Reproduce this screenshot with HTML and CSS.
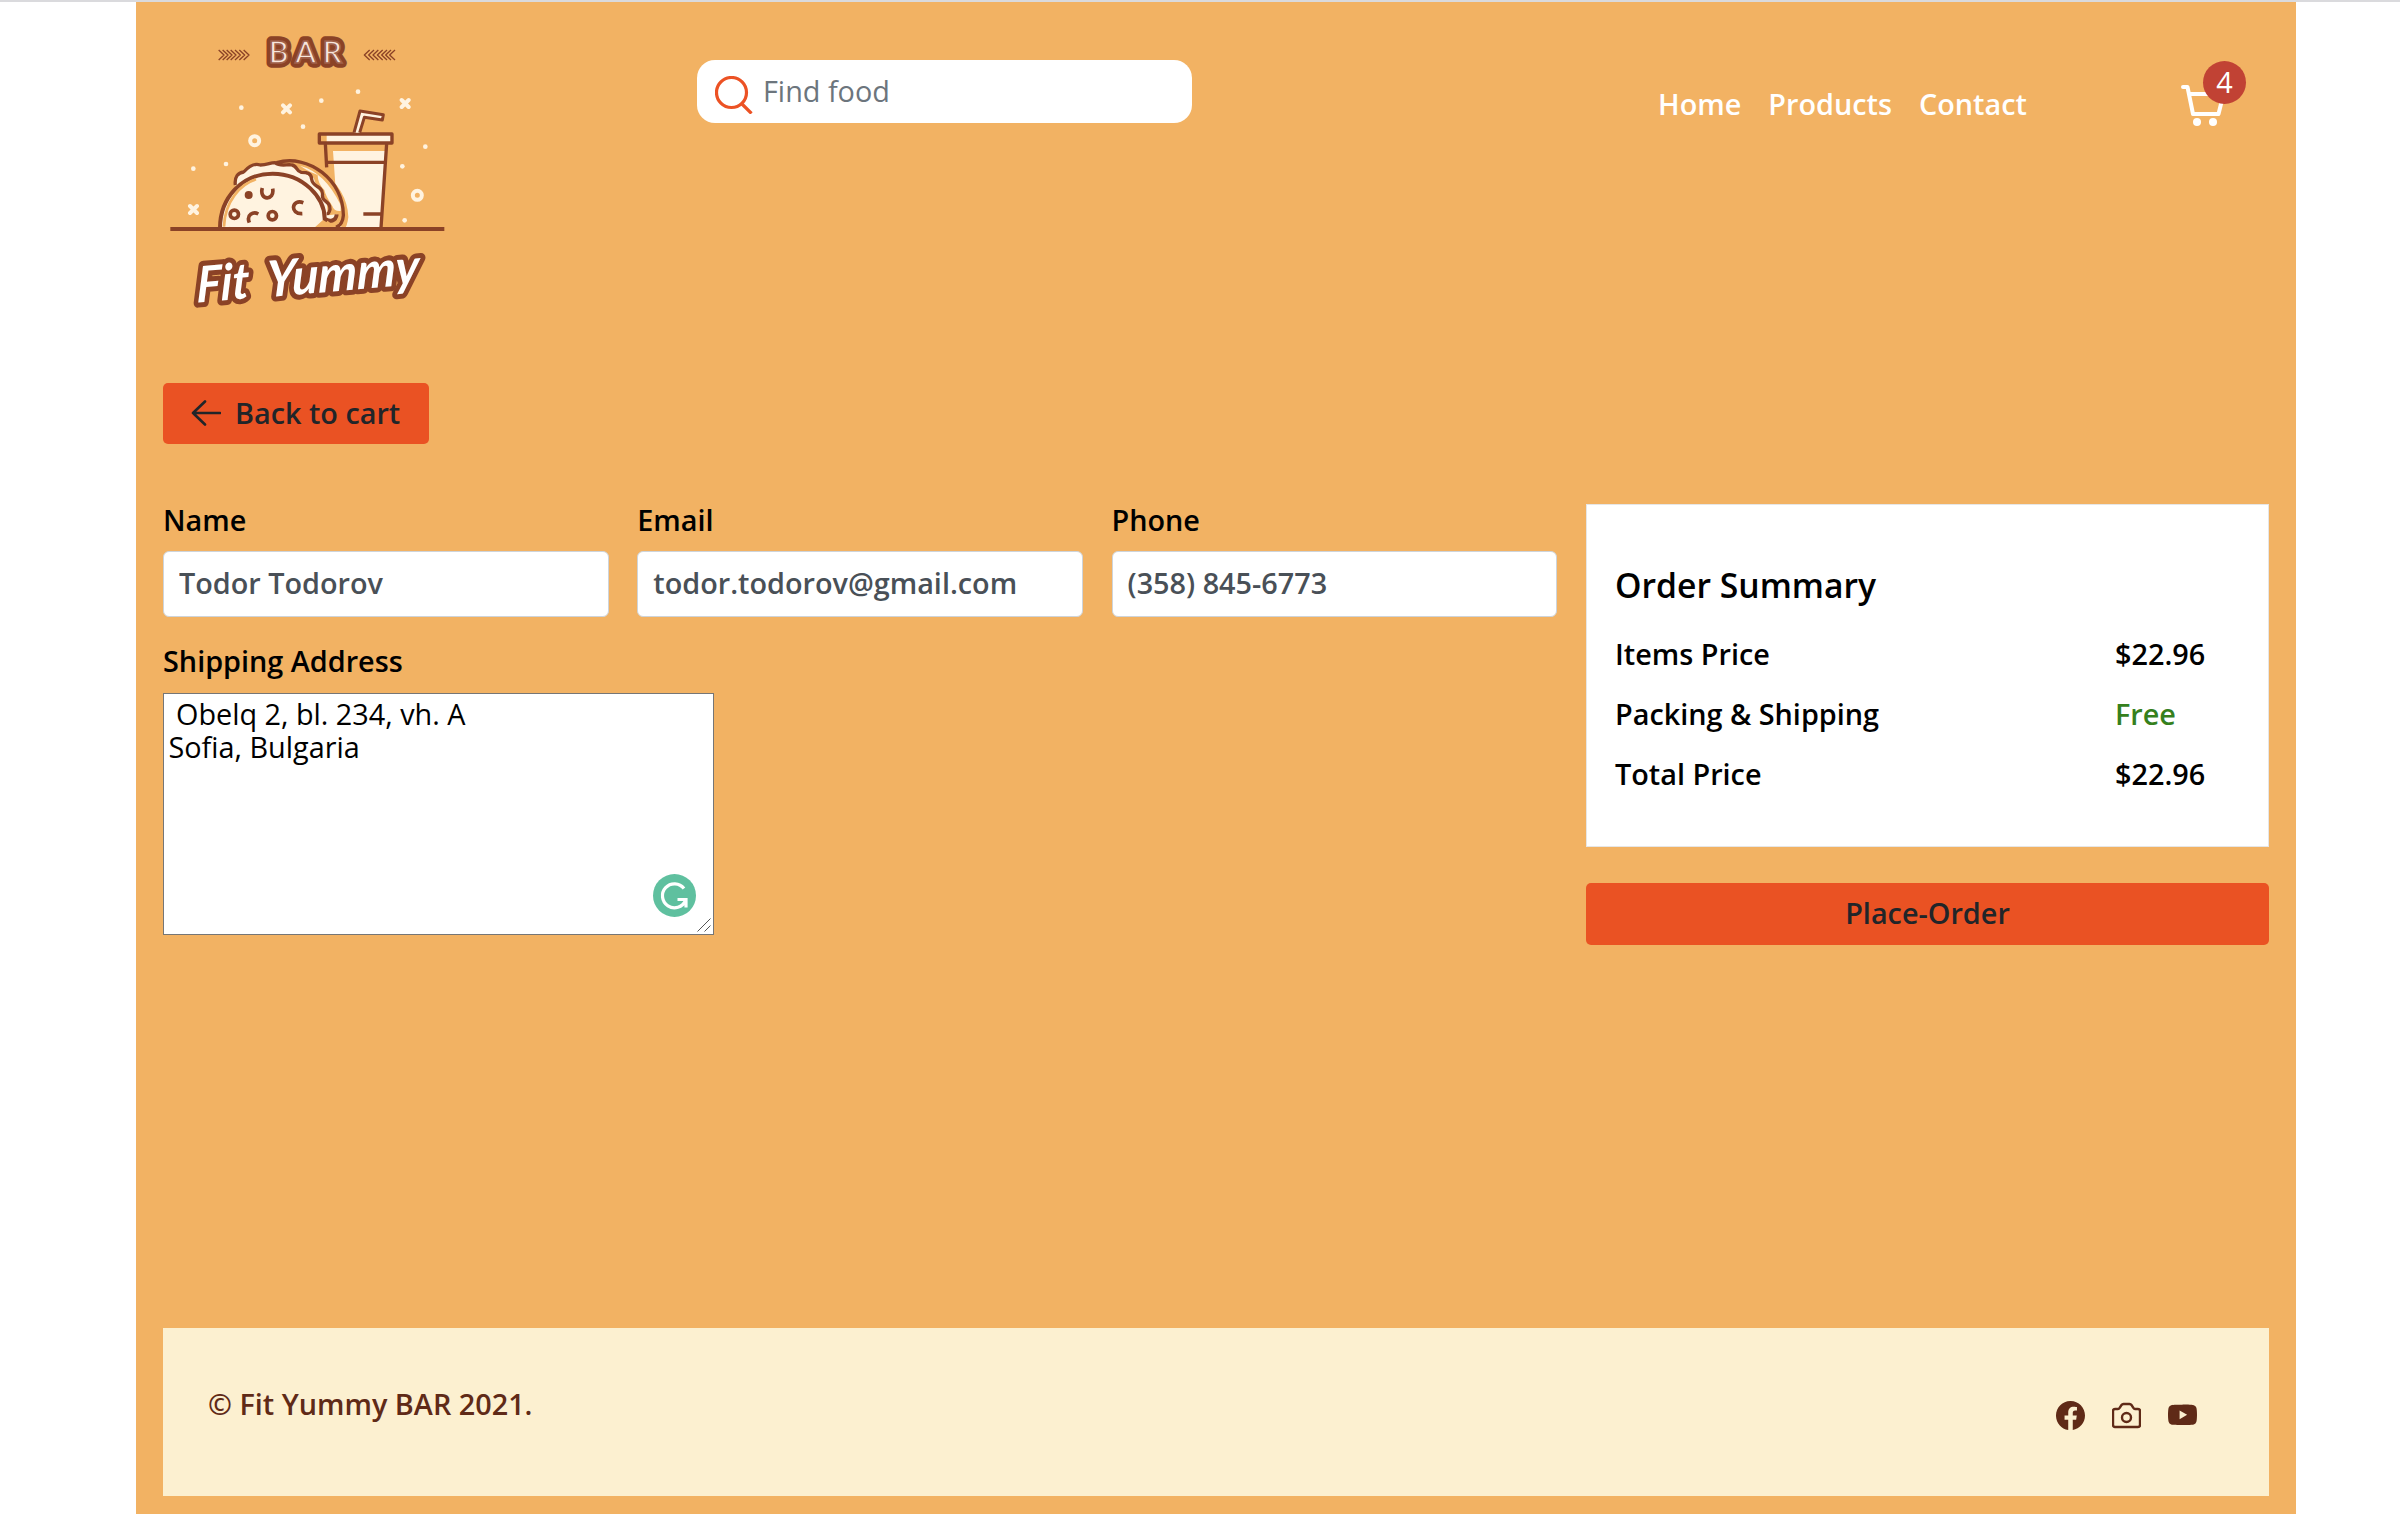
FILE: index.html
```html
<!DOCTYPE html>
<html lang="en">
<head>
<meta charset="utf-8">
<title>Fit Yummy – Place order</title>
<link rel="stylesheet" href="styles.css">
</head>
<body>
<div class="page">
  <header class="header">
    <svg class="logo" viewBox="99 6 846 990" role="img" aria-label="Fit Yummy Bar">
      <g class="line thin">
        <path d="M266 150l16 15-16 15M278 150l16 15-16 15M290 150l16 15-16 15M302 150l16 15-16 15M315 150l16 15-16 15M328 150l16 15-16 15M341 150l16 15-16 15"/>
        <path d="M795 150l-16 15 16 15M783 150l-16 15 16 15M771 150l-16 15 16 15M758 150l-16 15 16 15M745 150l-16 15 16 15M732 150l-16 15 16 15M719 150l-16 15 16 15"/>
      </g>
      <text class="bar-text" x="416 496 578" y="188">BAR</text>
      <text class="bar-inline" x="416 496 578" y="188">BAR</text>
      <g class="cream">
        <circle cx="334" cy="323" r="7"/><circle cx="574" cy="302" r="7"/><circle cx="684" cy="275" r="7"/>
        <circle cx="519" cy="380" r="7"/><circle cx="886" cy="440" r="7"/><circle cx="817" cy="499" r="7"/>
        <circle cx="288" cy="492" r="7"/><circle cx="190" cy="506" r="7"/><circle cx="824" cy="661" r="7"/>
      </g>
      <g class="cream-line">
        <circle cx="374" cy="422" r="13.500"/><circle cx="862" cy="586" r="13.500"/>
        <path d="M459 316l21 21m0-21l-21 21M815 300l21 21m0-21l-21 21M180 618l21 21m0-21l-21 21"/>
      </g>
      <path class="cream" d="M590 404h192v24H590zM609 453h157l-14 230H625z"/>
      <path class="line" d="M568 402h218v27H568zM586 430l4 72M770 430l-17 254M588 487h178M700 642h54"/>
      <path class="line straw" d="M672 398l18-65 70 11-3 16-54-8-14 46"/>
      <path class="gap" d="M440 486c90-16 205 60 208 165q-3 25-10 32"/>
      <path class="cream" d="M318 552q0-35 25-37 22-24 42-23 30-5 52-5 30 8 58 10 25 24 56 36l8 24 18 30 14 25 2 35-40 36H300z"/>
      <path class="cream" d="M510 497q75 20 122 118v18q-20 2-25-15-20-30-24-48-20-20-20-45-20-8-34-16z"/>
      <path class="line" d="M316 555c-3-25 8-37 25-39 18-20 36-26 50-21 22 0 28-7 44-7 18 14 37 3 51 7 17 3 11 18 28 22 18 0 30 2 31 21 2 16 15 19 25 27 17 16-2 25 15 37 12 9 15 14 15 26q-3 14-10 14M440 488c95-28 202 53 200 159q-2 28-22 35"/>
      <path class="taco-body" d="M270 684c0-90 65-163 158-163s156 73 156 135c15 12 34 7 36-13"/>
      <path class="peach-line" d="M282 680c2-75 49-128 96-142M590 665l16 14"/>
      <circle class="brown" cx="356" cy="585" r="12"/>
      <g class="line bold"><circle cx="313" cy="643" r="12.500"/><circle cx="427" cy="647" r="12.500"/>
      <path d="M397 564c-11 38 38 40 31 2M520 608c-35-13-42 35-3 33M385 642c-15-8-37 2-27 26"/></g>
      <path class="line ground" d="M121 687h822"/>
      <g transform="rotate(-5 540 850) skewX(-6)">
        <text class="brand-text" x="288" y="878" textLength="158" lengthAdjust="spacingAndGlyphs">Fit</text>
        <text class="brand-text" x="498" y="880" textLength="460" lengthAdjust="spacingAndGlyphs">Yummy</text>
      </g>
    </svg>
    <label class="search">
      <svg class="search-icon" viewBox="0 0 38 38"><circle cx="16.500" cy="16.500" r="15"/><path d="M26.500 27.500l10 10"/></svg>
      <input type="text" placeholder="Find food">
    </label>
    <nav class="nav"><a>Home</a><a>Products</a><a>Contact</a></nav>
    <div class="cart">
      <svg class="cart-icon" viewBox="0 0 44 44"><path d="M2 3h4.500l5.500 27h25.500l5-20H9"/><circle cx="16" cy="38" r="4"/><circle cx="32" cy="38" r="4"/></svg>
      <span class="badge">4</span>
    </div>
  </header>

  <main>
    <button class="btn back"><svg class="arrow" viewBox="0 0 30 26"><path d="M29 13H2M14 1.500L2 13l12 11.500"/></svg>Back to cart</button>
    <div class="checkout">
      <form class="form">
        <label class="field"><span>Name</span><input type="text" value="Todor Todorov"></label>
        <label class="field"><span>Email</span><input type="text" value="todor.todorov@gmail.com"></label>
        <label class="field"><span>Phone</span><input type="text" value="(358) 845-6773"></label>
        <div class="field address">
          <label for="address">Shipping Address</label>
          <div class="area">
            <textarea id="address" spellcheck="false"> Obelq 2, bl. 234, vh. A
Sofia, Bulgaria</textarea>
            <svg class="assist" viewBox="0 0 43 43"><circle cx="21.500" cy="21.500" r="21.500"/><path d="M31 14.500a12 12 0 1 0 1.500 12M24.500 25.500h8.500v8"/></svg>
            <svg class="grip" viewBox="0 0 14 14"><path d="M.5 13.500l13-13M7.500 13.500l6-6"/></svg>
          </div>
        </div>
      </form>
      <aside>
        <section class="summary">
          <h2>Order Summary</h2>
          <dl>
            <dt>Items Price</dt><dd>$22.96</dd>
            <dt>Packing &amp; Shipping</dt><dd class="free">Free</dd>
            <dt>Total Price</dt><dd>$22.96</dd>
          </dl>
        </section>
        <button class="btn place">Place-Order</button>
      </aside>
    </div>
  </main>

  <footer class="footer">
    <p>© Fit Yummy BAR 2021.</p>
    <div class="social">
      <svg viewBox="0 0 16 16"><path d="M16 8.049c0-4.446-3.582-8.050-8-8.050C3.580 0-.002 3.603-.002 8.050c0 4.017 2.926 7.347 6.750 7.951v-5.625h-2.030V8.050H6.750V6.275c0-2.017 1.195-3.131 3.022-3.131.876 0 1.791.157 1.791.157v1.980h-1.009c-.993 0-1.303.621-1.303 1.258v1.510h2.218l-.354 2.326H9.250V16c3.824-.604 6.750-3.934 6.750-7.951z"/></svg>
      <svg class="camera" viewBox="0 0 29 29"><path d="M3 8h3q1 0 1.500-1l2-3q.7-1 2-1h6q1.300 0 2 1l2 3q.5 1 1.500 1h3q2 0 2 2v14q0 2-2 2H3q-2 0-2-2V10q0-2 2-2z"/><circle cx="14.500" cy="16.500" r="4.500"/></svg>
      <svg viewBox="0 0 16 16"><path d="M8.051 1.999h.089c.822.003 4.987.033 6.110.335a2.010 2.010 0 0 1 1.415 1.420c.101.380.172.883.220 1.402l.010.104.022.260.008.104c.065.914.073 1.770.074 1.957v.075c-.001.194-.010 1.108-.082 2.060l-.008.105-.009.104c-.050.572-.124 1.140-.235 1.558a2.007 2.007 0 0 1-1.415 1.420c-1.160.312-5.569.334-6.180.335h-.142c-.309 0-1.587-.006-2.927-.052l-.170-.006-.087-.004-.171-.007-.171-.007c-1.110-.049-2.167-.128-2.654-.260a2.007 2.007 0 0 1-1.415-1.419c-.111-.417-.185-.986-.235-1.558L.090 9.820l-.008-.104A31.400 31.400 0 0 1 0 7.680v-.123c.002-.215.010-.958.064-1.778l.007-.103.003-.052.008-.104.022-.260.010-.104c.048-.519.119-1.023.220-1.402a2.007 2.007 0 0 1 1.415-1.420c.487-.130 1.544-.210 2.654-.260l.170-.007.172-.006.086-.003.171-.007A99.788 99.788 0 0 1 7.858 2h.193zM6.400 5.209v4.818l4.157-2.408L6.400 5.209z"/></svg>
    </div>
  </footer>
</div>
</body>
</html>
```
FILE: styles.css
```css
* { box-sizing: border-box; }
body {
  margin: 0;
  border-top: 2px solid #dadadd;
  background: #fff;
  color: #000;
  font: 600 28.8px/1.5 "Open Sans", "Noto Sans", sans-serif;
}
input, textarea, button { font: inherit; outline: 0; }
.page {
  display: flex;
  flex-direction: column;
  width: 2160px;
  height: 1512px;
  margin-left: 136px;
  padding: 0 27px 18px;
  background: #f2b263;
}
.header {
  display: grid;
  grid-template-columns: 534px 963px 521px 61px;
  align-items: start;
  height: 330px;
}
.logo { width: 282px; height: 330px; }
.line, .line path { fill: none; stroke: #8b4226; stroke-width: 10; stroke-linejoin: round; }
.bold, .bold path { stroke-width: 11; }
.thin path { stroke-width: 4; }
.ground { stroke-width: 12; }
.straw { fill: #fff3e0; stroke-width: 9; }
.cream { fill: #fff3e0; }
.brown { fill: #8b4226; }
.gap { fill: #f2b263; stroke: #f2b263; stroke-width: 14; }
.cream-line { fill: none; stroke: #fff3e0; stroke-width: 12; stroke-linecap: round; }
.taco-body { fill: #fff3e0; stroke: #8b4226; stroke-width: 12; }
.peach-line { fill: none; stroke: #f2b263; stroke-width: 8; }
.bar-text {
  fill: #f8e6dc;
  stroke: #8b4226;
  stroke-width: 28;
  stroke-linejoin: round;
  paint-order: stroke;
  font: 700 90px "Lato", sans-serif;
}
.bar-inline { fill: none; stroke: #a0604a; stroke-width: 5; font: 700 90px "Lato", sans-serif; }
.brand-text {
  fill: #fff;
  stroke: #8b4226;
  stroke-width: 30;
  stroke-linejoin: round;
  paint-order: stroke;
  font: italic 700 150px "Lato", sans-serif;
}
.search {
  display: flex;
  align-items: center;
  width: 495px;
  height: 63px;
  margin-top: 58px;
  padding-left: 18px;
  border-radius: 18px;
  background: #fff;
}
.search-icon { width: 38px; height: 38px; margin-top: 6px; fill: none; stroke: #ec5224; stroke-width: 3.2; }
.search input { width: 400px; padding: 0 0 2px 10px; border: 0; background: none; font-weight: 400; }
.search input::placeholder { color: #6c757d; opacity: 1; }
.nav { display: flex; gap: 27px; margin-top: 80px; margin-left: -2px; color: #fff; }
.cart { position: relative; height: 64px; margin-top: 60px; }
.cart-icon { width: 44px; height: 44px; margin-top: 22px; fill: none; stroke: #fff; stroke-width: 4; stroke-linecap: round; stroke-linejoin: round; overflow: visible; }
.cart-icon circle { fill: #fff; stroke: none; }
.badge {
  position: absolute;
  left: 22px;
  top: -1px;
  width: 43px;
  height: 43px;
  border-radius: 50%;
  background: #c14234;
  color: #fff;
  font-weight: 400;
  line-height: 42px;
  text-align: center;
}
.btn { border: 0; border-radius: 5px; background: #ea5223; color: #212529; }
.back { display: flex; align-items: center; gap: 14px; width: 266px; height: 61px; margin-top: 51px; padding: 0 28px 1px; white-space: nowrap; }
.arrow { flex: none; width: 30px; height: 26px; fill: none; stroke: #212529; stroke-width: 2.6; stroke-linecap: round; stroke-linejoin: round; }
.checkout { display: grid; grid-template-columns: 1394px 683px; gap: 29px; margin-top: 60px; }
.form { display: grid; grid-template-columns: repeat(3, 445.500px); column-gap: 28.750px; align-content: start; }
.field { display: flex; flex-direction: column; line-height: 31px; }
.field > input {
  width: 100%;
  height: 66px;
  margin-top: 16px;
  padding: 0 15px 3px;
  border: 1px solid #ced4da;
  border-radius: 6px;
  color: #495057;
}
.address { grid-column: 1 / 4; margin-top: 28px; }
.area { position: relative; width: 551px; height: 242px; margin-top: 17px; }
.area textarea {
  display: block;
  width: 551px;
  height: 242px;
  padding: 3px 4.500px;
  border: 1px solid #767676;
  resize: none;
  font-weight: 400;
  line-height: 33px;
}
.assist { position: absolute; right: 18.500px; bottom: 18.500px; width: 43px; height: 43px; fill: #5fc09f; }
.assist path { fill: none; stroke: #fff; stroke-width: 3.2; }
.grip { position: absolute; right: 3px; bottom: 3px; width: 14px; height: 14px; stroke: #555; stroke-width: 1; }
.summary { height: 343px; padding: 57px 28px 0; border: 1px solid #e6e6e6; background: #fff; }
.summary h2 { margin: 0; font: 600 33.700px/46px "Open Sans", sans-serif; }
.summary dl { display: grid; grid-template-columns: 500px 1fr; margin: 16px 0 0; line-height: 60px; }
.summary dd { margin: 0; }
.summary .free { color: #35801d; }
.place { width: 683px; height: 62px; margin-top: 36px; padding: 0 0 2px; }
.footer {
  display: flex;
  justify-content: space-between;
  height: 168px;
  margin-top: auto;
  padding: 54px 72px 0 45px;
  background: #fcf0d0;
  color: #5f2a17;
}
.footer p { margin: 0; }
.social { display: flex; gap: 27px; padding-top: 19px; fill: #5f2a17; }
.social svg { width: 29px; height: 29px; }
.social .camera { fill: none; stroke: #5f2a17; stroke-width: 2.4; }
```
